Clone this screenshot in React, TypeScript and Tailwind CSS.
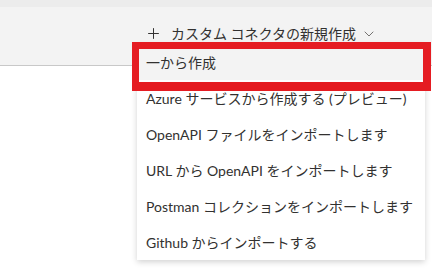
import { Plus, ChevronDown } from 'lucide-react'

const items = [
  '一から作成',
  'Azure サービスから作成する (プレビュー)',
  'OpenAPI ファイルをインポートします',
  'URL から OpenAPI をインポートします',
  'Postman コレクションをインポートします',
  'Github からインポートする',
]

const App = () => {
  return (
    <div
      className="relative h-[272px] w-[432px] overflow-hidden bg-white"
      style={{ fontFamily: 'Lato, "Noto Sans CJK JP", sans-serif' }}
    >
      <div className="h-[66px] border-b border-[#c8c8c8] bg-[#f3f3f3]">
        <div className="h-[7px] bg-[#ececec]" />
        <div className="ml-[145px] mt-[16px] flex items-center text-[14px] text-[#323130]">
          <Plus size={17} strokeWidth={1.4} className="text-[#323130]" />
          <span className="ml-[9px] whitespace-nowrap">カスタム コネクタの新規作成</span>
          <ChevronDown size={16} strokeWidth={1.3} className="ml-[5px] text-[#605e5c]" />
        </div>
      </div>

      <div className="absolute left-[137px] top-[44px] w-[288px] bg-white shadow-[0_2px_6px_rgba(0,0,0,0.18)]">
        {items.map((label, i) => (
          <div
            key={label}
            className={`flex h-[36px] items-center whitespace-nowrap px-[9px] text-[14px] text-[#323130] ${i === 0 ? 'bg-[#f3f3f3]' : ''}`}
          >
            {label}
          </div>
        ))}
      </div>

      <div className="absolute left-[132px] top-[42px] h-[49px] w-[299px] border-[7px] border-b-[9px] border-r-[8px] border-[#e51c22]" />
    </div>
  )
}

export default App
